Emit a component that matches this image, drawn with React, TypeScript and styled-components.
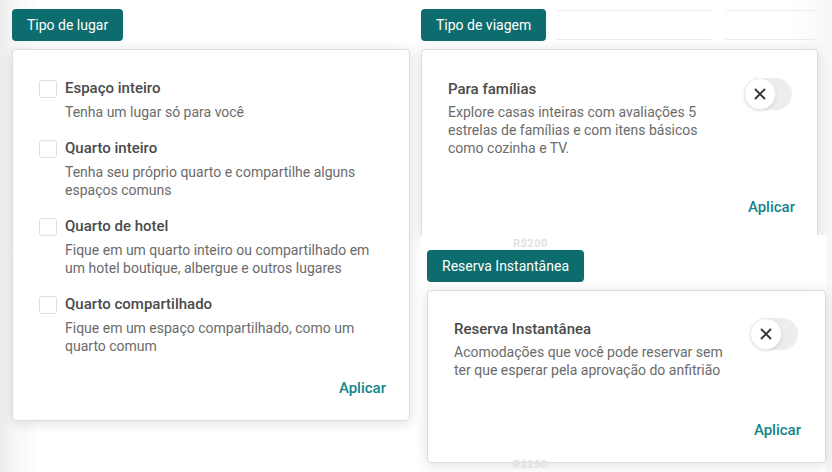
import React from "react";
import styled, { createGlobalStyle } from "styled-components";

const Global = createGlobalStyle`
  html, body { margin: 0; padding: 0; }
  body {
    width: 832px;
    height: 472px;
    overflow: hidden;
    background: #ffffff;
    font-family: Roboto, "Liberation Sans", Arial, sans-serif;
    -webkit-font-smoothing: antialiased;
  }
  * { box-sizing: border-box; }
`;

const Page = styled.div`
  position: relative;
  width: 832px;
  height: 472px;
  display: flex;
  gap: 11px;
  padding: 9px 0 0 12px;
  background: linear-gradient(90deg, #ececec 0px, #f6f6f6 12px, #ffffff 40px, #ffffff 790px, #f7f7f7 832px);
`;

const Column = styled.div<{ $width: number }>`
  width: ${(p) => p.$width}px;
  display: flex;
  flex-direction: column;
  gap: 8px;
`;

const HeaderRow = styled.div`
  display: flex;
  align-items: center;
  gap: 15px;
  height: 32px;
`;

const Chip = styled.button`
  height: 32px;
  padding: 0 15px;
  border: none;
  border-radius: 4px;
  background: #0c6c6e;
  color: #ffffff;
  font-family: inherit;
  font-size: 14px;
  line-height: 32px;
  white-space: nowrap;
  cursor: pointer;
`;

const GhostInput = styled.div<{ $w: number; $ml?: number }>`
  width: ${(p) => p.$w}px;
  margin-left: ${(p) => p.$ml ?? 0}px;
  height: 30px;
  border-top: 1px solid #ececec;
  border-bottom: 1px solid #ececec;
`;

const Panel = styled.div<{ $height: number; $width?: number; $cut?: boolean }>`
  height: ${(p) => p.$height}px;
  width: ${(p) => (p.$width ? `${p.$width}px` : "auto")};
  background: #ffffff;
  border: 1px solid #dcdcdc;
  border-bottom: ${(p) => (p.$cut ? "none" : "1px solid #dcdcdc")};
  border-radius: ${(p) => (p.$cut ? "4px 4px 0 0" : "4px")};
  box-shadow: 0 2px 14px rgba(0, 0, 0, 0.13);
  display: flex;
  flex-direction: column;
`;

const PlacePanelBody = styled.div`
  padding: 28px 23px 22px 26px;
  display: flex;
  flex-direction: column;
  gap: 17px;
  flex: 1;
`;

const OptionRow = styled.label`
  display: flex;
  gap: 8px;
  align-items: flex-start;
`;

const Checkbox = styled.span`
  flex: none;
  width: 18px;
  height: 18px;
  margin-top: 2px;
  border: 1px solid #dedede;
  border-radius: 3px;
  background: #fff;
`;

const OptionText = styled.div`
  display: flex;
  flex-direction: column;
  gap: 5px;
`;

const Title = styled.div`
  font-size: 15px;
  line-height: 20px;
  font-weight: 500;
  color: #4a4a4a;
`;

const Desc = styled.div`
  font-size: 14px;
  line-height: 18px;
  color: #6b6b6b;
`;

const Footer = styled.div`
  margin-top: auto;
  display: flex;
  justify-content: flex-end;
`;

const ApplyButton = styled.button`
  border: none;
  background: none;
  padding: 0;
  font-family: inherit;
  font-size: 15px;
  line-height: 20px;
  font-weight: 500;
  color: #14868a;
  cursor: pointer;
`;

const ToggleBody = styled.div<{ $pad: string }>`
  padding: ${(p) => p.$pad};
  display: flex;
  flex-direction: column;
  flex: 1;
`;

const ToggleRow = styled.div`
  display: flex;
  align-items: flex-start;
  justify-content: space-between;
  gap: 8px;
`;

const ToggleText = styled.div`
  width: 282px;
  display: flex;
  flex-direction: column;
  gap: 4px;
  padding-top: 1px;
`;

const Switch = styled.div`
  flex: none;
  width: 48px;
  height: 32px;
  margin-right: 3px;
  border-radius: 16px;
  background: #ededed;
  display: flex;
  align-items: center;
`;

const Knob = styled.div`
  width: 32px;
  height: 32px;
  border-radius: 50%;
  background: #ffffff;
  box-shadow: 0 1px 3px rgba(0, 0, 0, 0.12);
  border: 1px solid #ededed;
  display: flex;
  align-items: center;
  justify-content: center;
`;

const LowerGroup = styled.div`
  position: relative;
  flex: 1;
  margin-top: -8px;
  padding: 15px 0 0 6px;
  display: flex;
  flex-direction: column;
  gap: 8px;
  background: #ffffff;
`;

const ChipRow = styled.div`
  display: flex;
`;

const FadedPrice = styled.span<{ $left: number; $top: number }>`
  position: absolute;
  left: ${(p) => p.$left}px;
  top: ${(p) => p.$top}px;
  color: #e2e2e2;
  font-size: 11px;
  line-height: 9px;
  font-weight: 700;
  letter-spacing: 0.5px;
`;

const CloseIcon = () => (
  <svg width="12" height="12" viewBox="0 0 12 12" aria-hidden>
    <path d="M1.5 1.5 L10.5 10.5 M10.5 1.5 L1.5 10.5" stroke="#333" strokeWidth="1.8" strokeLinecap="round" />
  </svg>
);

const places = [
  { title: "Espaço inteiro", desc: "Tenha um lugar só para você" },
  { title: "Quarto inteiro", desc: "Tenha seu próprio quarto e compartilhe alguns espaços comuns" },
  { title: "Quarto de hotel", desc: "Fique em um quarto inteiro ou compartilhado em um hotel boutique, albergue e outros lugares" },
  { title: "Quarto compartilhado", desc: "Fique em um espaço compartilhado, como um quarto comum" },
];

const ToggleCard = ({
  title,
  desc,
  height,
  width,
  pad,
  cut,
}: {
  title: string;
  desc: string;
  height: number;
  width: number;
  pad: string;
  cut?: boolean;
}) => (
  <Panel $height={height} $width={width} $cut={cut}>
    <ToggleBody $pad={pad}>
      <ToggleRow>
        <ToggleText>
          <Title>{title}</Title>
          <Desc>{desc}</Desc>
        </ToggleText>
        <Switch>
          <Knob>
            <CloseIcon />
          </Knob>
        </Switch>
      </ToggleRow>
      <Footer>
        <ApplyButton>Aplicar</ApplyButton>
      </Footer>
    </ToggleBody>
  </Panel>
);

export default function App() {
  return (
    <>
      <Global />
      <Page>
        <Column $width={398}>
          <HeaderRow>
            <Chip>Tipo de lugar</Chip>
          </HeaderRow>
          <Panel $height={372}>
            <PlacePanelBody>
              {places.map((p) => (
                <OptionRow key={p.title}>
                  <Checkbox />
                  <OptionText>
                    <Title>{p.title}</Title>
                    <Desc>{p.desc}</Desc>
                  </OptionText>
                </OptionRow>
              ))}
              <Footer>
                <ApplyButton>Aplicar</ApplyButton>
              </Footer>
            </PlacePanelBody>
          </Panel>
        </Column>
        <Column $width={405}>
          <HeaderRow>
            <Chip>Tipo de viagem</Chip>
            <GhostInput $w={154} $ml={-4} />
            <GhostInput $w={91} />
          </HeaderRow>
          <ToggleCard
            title="Para famílias"
            desc="Explore casas inteiras com avaliações 5 estrelas de famílias e com itens básicos como cozinha e TV."
            height={186}
            width={397}
            pad="28px 22px 18px 26px"
            cut
          />
          <LowerGroup>
            <FadedPrice $left={92} $top={4}>R$200</FadedPrice>
            <ChipRow>
              <Chip>Reserva Instantânea</Chip>
            </ChipRow>
            <ToggleCard
              title="Reserva Instantânea"
              desc="Acomodações que você pode reservar sem ter que esperar pela aprovação do anfitrião"
              height={173}
              width={399}
              pad="27px 24px 22px 26px"
            />
            <FadedPrice $left={92} $top={225}>R$250</FadedPrice>
          </LowerGroup>
        </Column>
      </Page>
    </>
  );
}
